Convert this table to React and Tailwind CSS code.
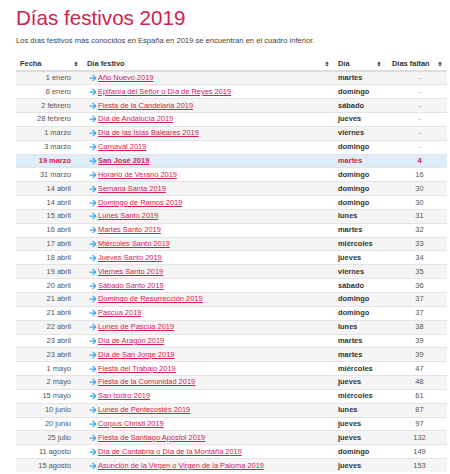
import React from "react";
import { FaArrowRight, FaSort } from "react-icons/fa";

const rows = [
  ["1 enero", "Año Nuevo 2019", "martes", "-"],
  ["6 enero", "Epifanía del Señor o Día de Reyes 2019", "domingo", "-"],
  ["2 febrero", "Fiesta de la Candelaria 2019", "sábado", "-"],
  ["28 febrero", "Día de Andalucía 2019", "jueves", "-"],
  ["1 marzo", "Día de las Islas Baleares 2019", "viernes", "-"],
  ["3 marzo", "Carnaval 2019", "domingo", "-"],
  ["19 marzo", "San José 2019", "martes", "4", true],
  ["31 marzo", "Horario de Verano 2019", "domingo", "16"],
  ["14 abril", "Semana Santa 2019", "domingo", "30"],
  ["14 abril", "Domingo de Ramos 2019", "domingo", "30"],
  ["15 abril", "Lunes Santo 2019", "lunes", "31"],
  ["16 abril", "Martes Santo 2019", "martes", "32"],
  ["17 abril", "Miércoles Santo 2019", "miércoles", "33"],
  ["18 abril", "Jueves Santo 2019", "jueves", "34"],
  ["19 abril", "Viernes Santo 2019", "viernes", "35"],
  ["20 abril", "Sábado Santo 2019", "sábado", "36"],
  ["21 abril", "Domingo de Resurrección 2019", "domingo", "37"],
  ["21 abril", "Pascua 2019", "domingo", "37"],
  ["22 abril", "Lunes de Pascua 2019", "lunes", "38"],
  ["23 abril", "Día de Aragón 2019", "martes", "39"],
  ["23 abril", "Día de San Jorge 2019", "martes", "39"],
  ["1 mayo", "Fiesta del Trabajo 2019", "miércoles", "47"],
  ["2 mayo", "Fiesta de la Comunidad 2019", "jueves", "48"],
  ["15 mayo", "San Isidro 2019", "miércoles", "61"],
  ["10 junio", "Lunes de Pentecostés 2019", "lunes", "87"],
  ["20 junio", "Corpus Christi 2019", "jueves", "97"],
  ["25 julio", "Fiesta de Santiago Apóstol 2019", "jueves", "132"],
  ["11 agosto", "Día de Cantabria o Día de la Montaña 2019", "domingo", "149"],
  ["15 agosto", "Asunción de la Virgen o Virgen de la Paloma 2019", "jueves", "153"],
];

const HeadCell = ({ label, className }) => (
  <th className={`h-[14px] px-[4px] text-left font-bold align-middle ${className}`}>
    <div className="flex items-center justify-between">
      <span>{label}</span>
      <FaSort className="w-[6px] h-[6px] text-[#333]" />
    </div>
  </th>
);

export default function App() {
  return (
    <div className="w-[450px] h-[474px] overflow-hidden bg-white pl-4 pt-[5px] font-['Liberation_Sans',Arial,sans-serif] text-[#333]">
      <h1 className="text-[20.6px] leading-[26px] text-[#d6204e]">Días festivos 2019</h1>
      <p className="mt-[5px] text-[7.6px] leading-[10px] text-[#444]">
        Los días festivos más conocidos en España en 2019 se encuentran en el cuadro inferior.
      </p>
      <table className="mt-[11px] w-[431px] border-collapse text-[7.45px] leading-[10px]">
        <thead>
          <tr className="border-b-2 border-[#ddd]">
            <HeadCell label="Fecha" className="w-[67px]" />
            <HeadCell label="Día festivo" className="w-[251px]" />
            <HeadCell label="Día" className="w-[52px]" />
            <HeadCell label="Días faltan" className="pl-[6px]" />
          </tr>
        </thead>
        <tbody>
          {rows.map(([fecha, name, dia, faltan, hi], i) => (
            <tr
              key={i}
              className={`h-[13.85px] border-t border-[#e4e4e4] ${
                hi ? "bg-[#deedf8]" : i % 2 === 0 ? "bg-[#f5f5f5]" : "bg-white"
              }`}
            >
              <td className={`pr-[12px] text-right ${hi ? "font-bold text-[#d6204e]" : "text-[#555]"}`}>
                {fecha}
              </td>
              <td className="pl-[6px]">
                <span className="flex items-center gap-[1px]">
                  <FaArrowRight className="w-[8px] h-[8px] text-[#3aa6e6]" />
                  <a
                    href="#"
                    className={`underline text-[#d6204e] ${hi ? "font-bold" : ""}`}
                  >
                    {name}
                  </a>
                </span>
              </td>
              <td className={`pl-[4px] font-bold ${hi ? "text-[#d6204e]" : "text-[#333]"}`}>{dia}</td>
              <td
                className={`text-center pl-[6px] ${
                  hi ? "font-bold text-[#d6204e]" : faltan === "-" ? "text-[#888]" : "text-[#555]"
                }`}
              >
                {faltan}
              </td>
            </tr>
          ))}
        </tbody>
      </table>
    </div>
  );
}
